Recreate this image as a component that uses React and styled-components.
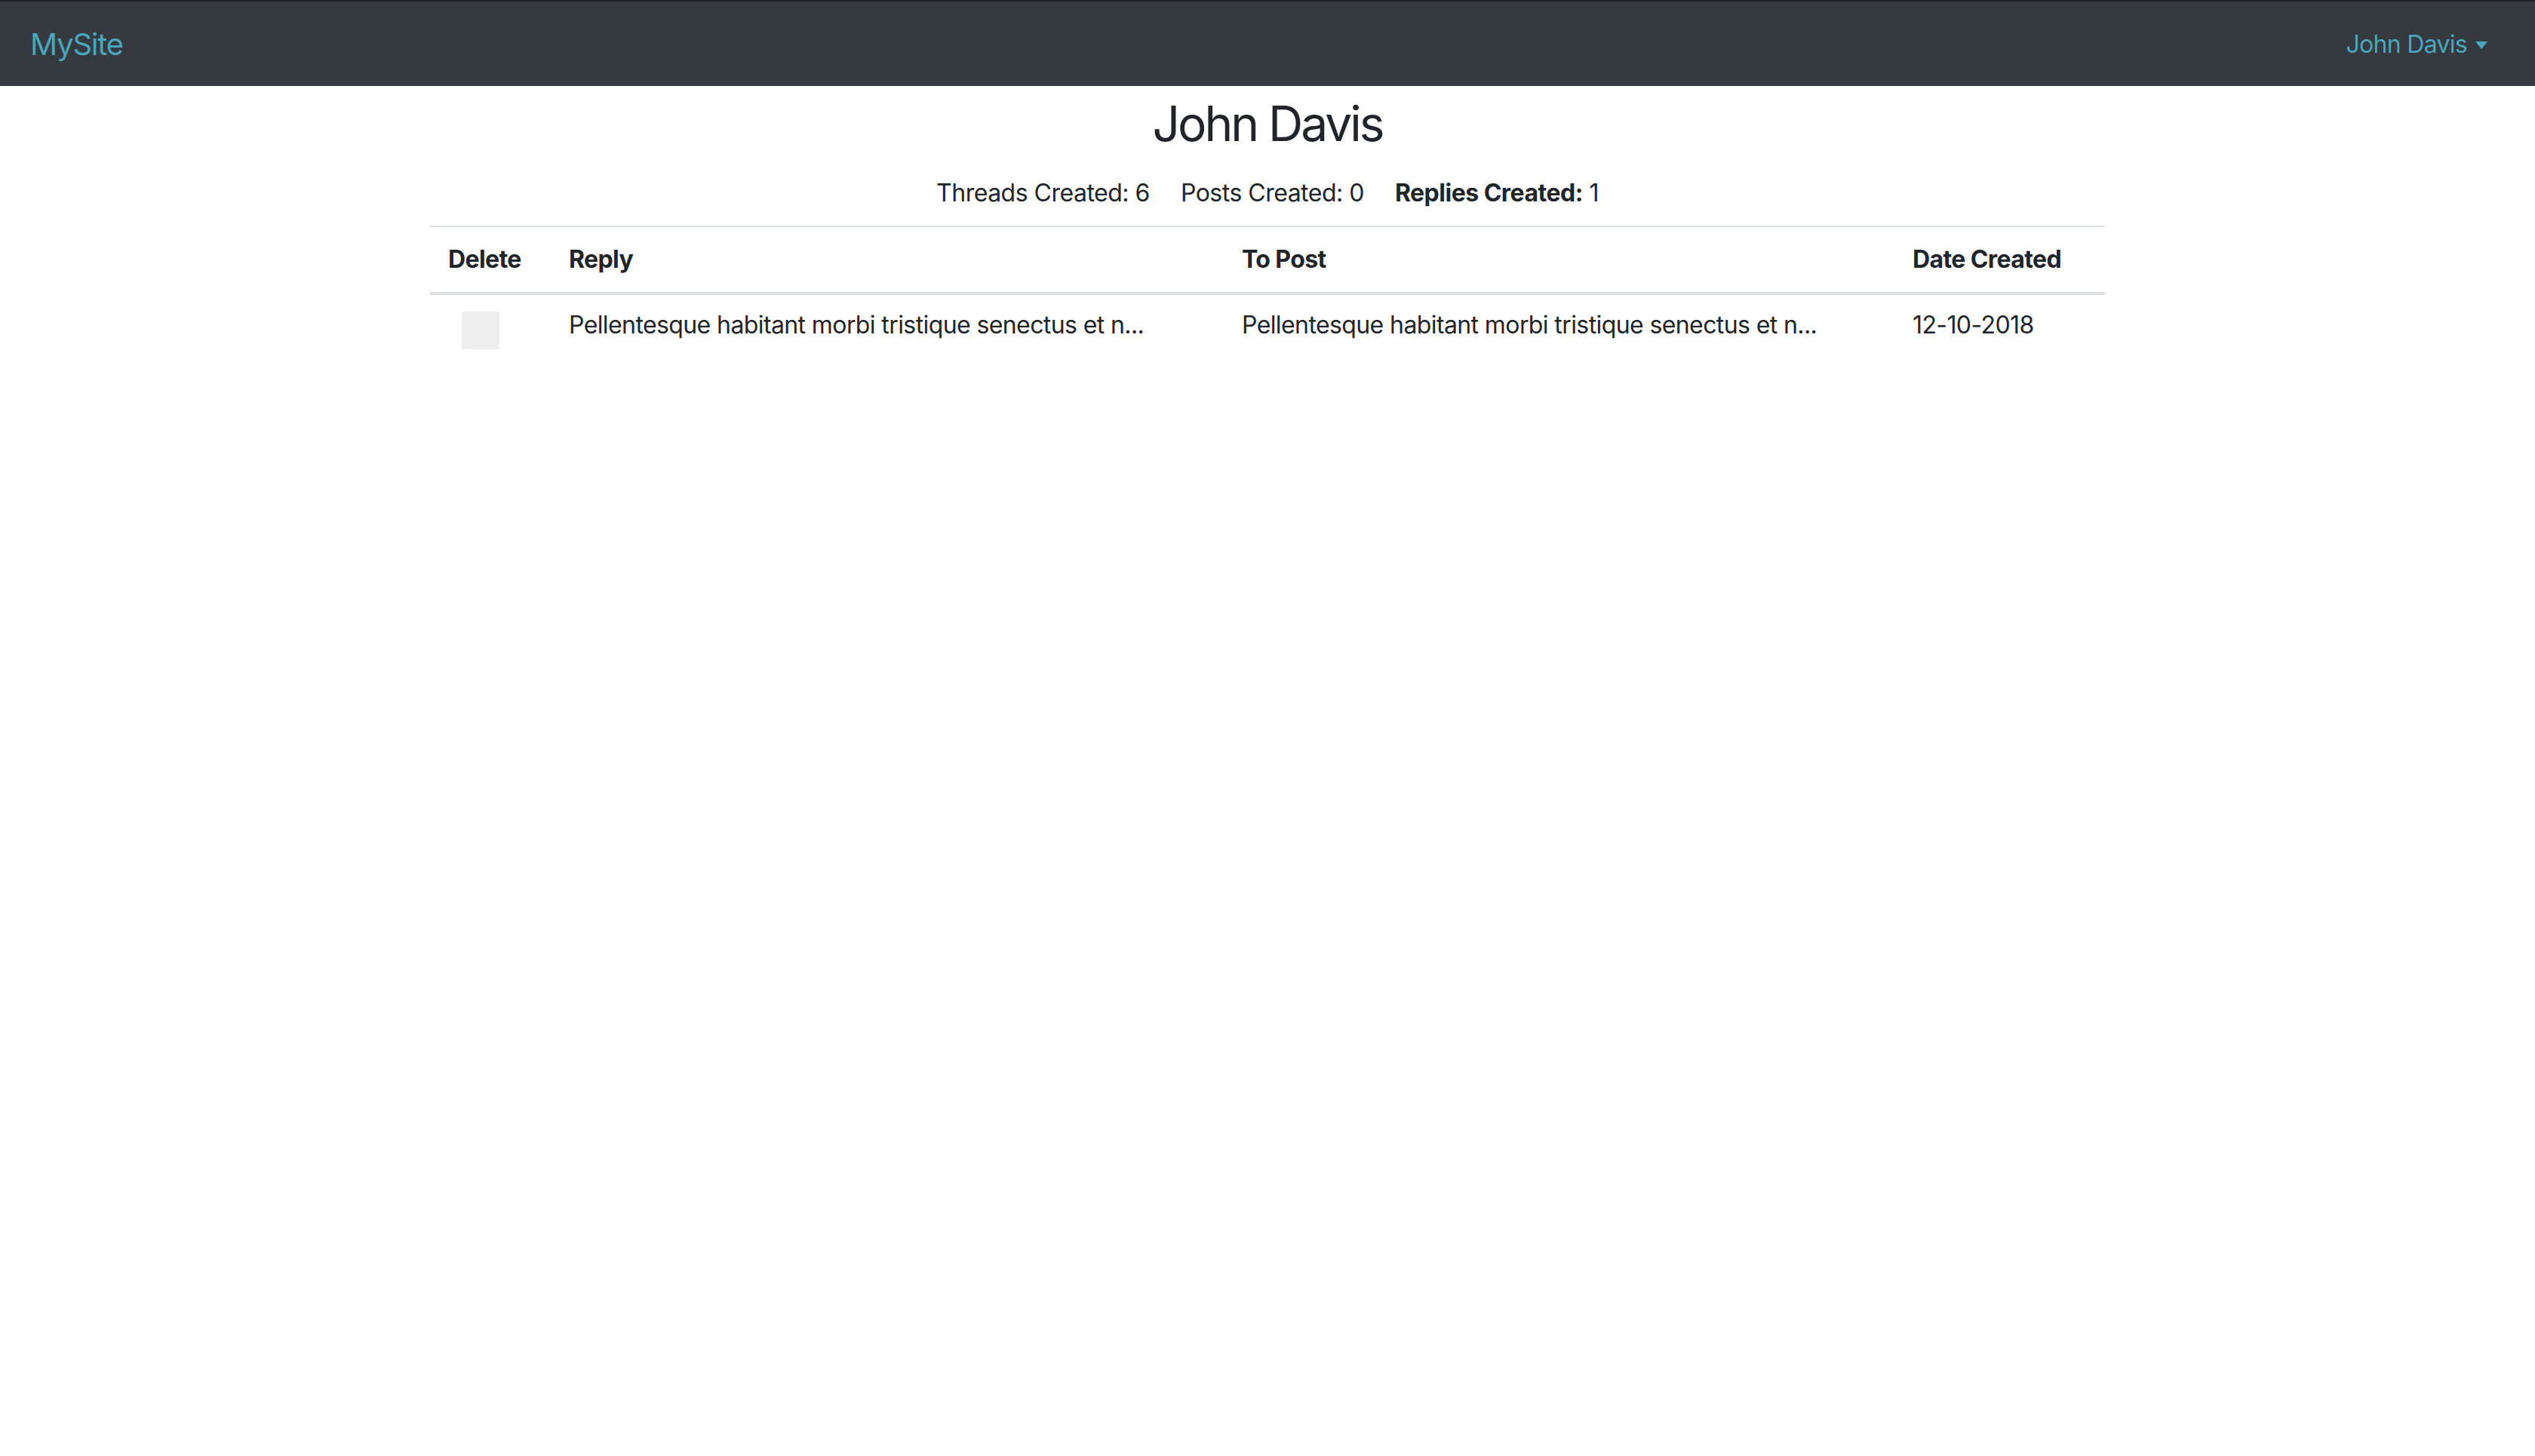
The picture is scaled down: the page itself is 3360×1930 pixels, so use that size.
import React from 'react';
import styled, { createGlobalStyle } from 'styled-components';

const GlobalStyle = createGlobalStyle`
  * { box-sizing: border-box; }
  body {
    margin: 0;
    background: #fff;
    color: #212529;
    font-family: Inter, "Noto Sans", "Liberation Sans", sans-serif;
  }
`;

const Navbar = styled.nav`
  display: flex;
  align-items: center;
  justify-content: space-between;
  height: 114px;
  padding: 2px 47px 0 40px;
  background: #343a40;
  border-top: 2px solid #1d2023;
`;

const Brand = styled.a`
  color: #4aa6bd;
  font-size: 40px;
  line-height: 60px;
  letter-spacing: -1.2px;
  text-decoration: none;
`;

const UserMenu = styled.a`
  display: flex;
  align-items: center;
  gap: 11px;
  padding: 8px 16px;
  color: #4aa6bd;
  font-size: 32px;
  line-height: 48px;
  letter-spacing: -0.7px;
  text-decoration: none;
`;

const Caret = styled.span`
  width: 0;
  height: 0;
  border-top: 10px solid #4aa6bd;
  border-left: 8px solid transparent;
  border-right: 8px solid transparent;
  margin-top: 2px;
`;

const Container = styled.main`
  width: 2280px;
  margin: 0 auto;
  padding: 0 30px;
`;

const Title = styled.h2`
  margin: 12px 0 0;
  font-size: 64px;
  font-weight: 400;
  line-height: 1.2;
  text-align: center;
  letter-spacing: -3px;
`;

const Stats = styled.div`
  display: flex;
  justify-content: center;
  gap: 41px;
  margin-top: 32px;
  font-size: 32px;
  line-height: 42px;
  letter-spacing: -0.5px;
`;

const Stat = styled.span`
  strong { font-weight: 700; }
`;

const Table = styled.table`
  width: 100%;
  margin-top: 22px;
  border-collapse: collapse;
  table-layout: fixed;
  font-size: 32px;
  letter-spacing: -0.6px;
`;

const HeadCell = styled.th`
  width: ${p => p.$w}px;
  padding: 19px 24px;
  line-height: 48px;
  text-align: left;
  font-weight: 700;
  border-top: 2px solid #dee2e6;
  border-bottom: 4px solid #dee2e6;
`;

const Cell = styled.td`
  padding: 16px 24px;
  line-height: 48px;
  vertical-align: top;
  white-space: nowrap;
`;

const Check = styled.span`
  display: block;
  width: 50px;
  height: 50px;
  margin: 6px 0 0 18px;
  background: #eee;
`;

const columns = [
  { label: 'Delete', w: 160 },
  { label: 'Reply', w: 892 },
  { label: 'To Post', w: 889 },
  { label: 'Date Created', w: 279 },
];

const replies = [
  {
    id: 1,
    reply: 'Pellentesque habitant morbi tristique senectus et n...',
    post: 'Pellentesque habitant morbi tristique senectus et n...',
    date: '12-10-2018',
  },
];

export default function App() {
  return (
    <>
      <GlobalStyle />
      <Navbar>
        <Brand href="#">MySite</Brand>
        <UserMenu href="#">
          John Davis
          <Caret />
        </UserMenu>
      </Navbar>
      <Container>
        <Title>John Davis</Title>
        <Stats>
          <Stat>Threads Created: 6</Stat>
          <Stat>Posts Created: 0</Stat>
          <Stat><strong>Replies Created:</strong> 1</Stat>
        </Stats>
        <Table>
          <thead>
            <tr>
              {columns.map(c => (
                <HeadCell key={c.label} $w={c.w}>{c.label}</HeadCell>
              ))}
            </tr>
          </thead>
          <tbody>
            {replies.map(r => (
              <tr key={r.id}>
                <Cell><Check /></Cell>
                <Cell>{r.reply}</Cell>
                <Cell>{r.post}</Cell>
                <Cell>{r.date}</Cell>
              </tr>
            ))}
          </tbody>
        </Table>
      </Container>
    </>
  );
}
